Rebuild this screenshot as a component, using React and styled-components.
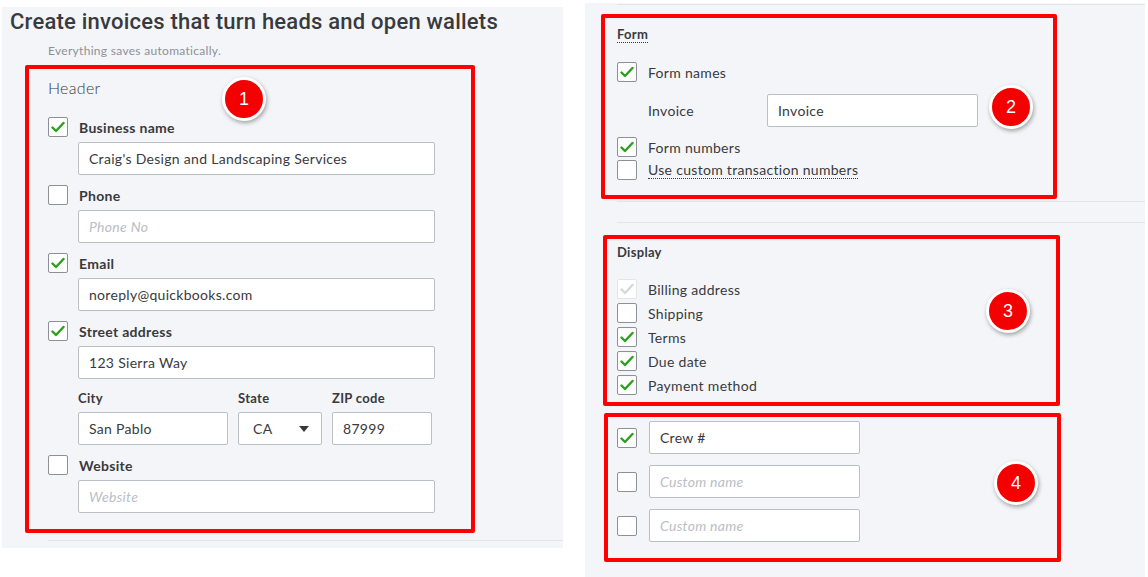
import React from "react";
import styled, { createGlobalStyle } from "styled-components";

const Global = createGlobalStyle`
  html, body { margin: 0; padding: 0; background: #fff; }
  body { font-family: "Lato", "Open Sans", sans-serif; color: #393a3d; letter-spacing: 0.3px; }
  * { box-sizing: border-box; }
`;

const Page = styled.div`
  display: flex;
  align-items: flex-start;
  width: 1148px;
  height: 577px;
  overflow: hidden;
`;

const LeftPanel = styled.section`
  margin: 7px 0 0 2px;
  width: 561px;
  height: 541px;
  background: #f4f5f8;
  display: flex;
  flex-direction: column;
`;

const RightPanel = styled.section`
  margin: 3px 0 0 22px;
  width: 560px;
  height: 574px;
  background: #f4f5f8;
  display: flex;
  flex-direction: column;
`;

const Title = styled.h1`
  margin: 0 0 0 8px;
  font-family: "Roboto", sans-serif;
  font-weight: 500;
  font-size: 22px;
  line-height: 30px;
  letter-spacing: 0.22px;
  color: #393a3d;
`;

const Subtitle = styled.div`
  margin: 6px 0 0 46px;
  font-size: 12px;
  line-height: 16px;
  color: #8d9096;
`;

const Highlight = styled.div`
  position: relative;
  margin: ${(p) => p.$m};
  width: ${(p) => p.$w}px;
  height: ${(p) => p.$h}px;
  border: 4px solid #ff0000;
  border-radius: 2px;
  padding: ${(p) => p.$pad};
  display: flex;
  flex-direction: column;
`;

const Badge = styled.div`
  position: absolute;
  left: ${(p) => p.$x - 26}px;
  top: ${(p) => p.$y - 26}px;
  width: 44px;
  height: 44px;
  border-radius: 50%;
  background: #f50000;
  border: 3px solid #fff;
  box-shadow: 1px 2px 4px rgba(0, 0, 0, 0.35);
  color: #fff;
  font-family: "Liberation Sans", Arial, sans-serif;
  font-size: 18px;
  letter-spacing: 0;
  display: flex;
  align-items: center;
  justify-content: center;
`;

const SectionHeading = styled.div`
  font-size: 16px;
  font-weight: 300;
  line-height: 20px;
  color: #393a3d;
`;

const BoldHeading = styled.div`
  align-self: flex-start;
  font-size: 13px;
  font-weight: 700;
  line-height: 16px;
  color: #393a3d;
  border-bottom: ${(p) => (p.$dotted ? "1px dotted #393a3d" : "none")};
`;

const CheckRow = styled.label`
  display: flex;
  align-items: center;
  gap: 11px;
  height: 20px;
  margin-top: ${(p) => p.$mt || 0}px;
  font-size: 14px;
  font-weight: ${(p) => (p.$bold ? 700 : 400)};
  color: #393a3d;
`;

const Box = styled.span`
  flex: none;
  width: 20px;
  height: 20px;
  background: #fff;
  border: 1px solid ${(p) => (p.$disabled ? "#e3e5e8" : "#8d9096")};
  border-radius: 2px;
  display: flex;
  align-items: center;
  justify-content: center;
`;

const Dotted = styled.span`
  border-bottom: 1px dotted #393a3d;
  line-height: 16px;
`;

const Field = styled.div`
  width: ${(p) => p.$w}px;
  height: 33px;
  flex: none;
  margin: ${(p) => p.$m || 0};
  background: #fff;
  border: 1px solid #babec5;
  border-radius: 2px;
  padding: 0 10px;
  display: flex;
  align-items: center;
  justify-content: space-between;
  font-size: 14px;
  color: ${(p) => (p.$ph ? "#babec5" : "#393a3d")};
  font-style: ${(p) => (p.$ph ? "italic" : "normal")};
`;

const Caret = styled.span`
  width: 0;
  height: 0;
  margin-right: 2px;
  border-left: 5px solid transparent;
  border-right: 5px solid transparent;
  border-top: 6px solid #393a3d;
`;

const AddressGrid = styled.div`
  margin: 11px 0 0 30px;
  display: flex;
  gap: 10px;
`;

const AddressCol = styled.div`
  display: flex;
  flex-direction: column;
  gap: 6px;
`;

const SmallLabel = styled.div`
  font-size: 13px;
  font-weight: 700;
  line-height: 16px;
  color: #393a3d;
`;

const Rule = styled.div`
  height: 1px;
  background: #e3e5e8;
  margin: ${(p) => p.$m};
`;

const InlineRow = styled.div`
  display: flex;
  align-items: center;
  margin-top: ${(p) => p.$mt || 0}px;
`;

const InlineLabel = styled.div`
  width: 119px;
  margin-left: 31px;
  font-size: 14px;
  color: #393a3d;
`;

const CustomRow = styled.div`
  display: flex;
  align-items: center;
  gap: 12px;
  margin-top: ${(p) => p.$mt || 0}px;
`;

const Check = ({ disabled }) => (
  <svg width="14" height="12" viewBox="0 0 14 12">
    <path
      d="M1.5 6.5 L5 10 L12.5 2"
      fill="none"
      stroke={disabled ? "#d4d7dc" : "#2ca01c"}
      strokeWidth="2.4"
      strokeLinecap="round"
      strokeLinejoin="round"
    />
  </svg>
);

const Checkbox = ({ checked, disabled }) => (
  <Box $disabled={disabled}>{checked && <Check disabled={disabled} />}</Box>
);

const HeaderItem = ({ label, checked, value, placeholder, first }) => (
  <>
    <CheckRow $bold $mt={first ? 19 : 10}>
      <Checkbox checked={checked} />
      {label}
    </CheckRow>
    <Field $w={357} $m="5px 0 0 30px" $ph={!value}>
      {value || placeholder}
    </Field>
  </>
);

export default function App() {
  return (
    <>
      <Global />
      <Page>
        <LeftPanel>
          <Title>Create invoices that turn heads and open wallets</Title>
          <Subtitle>Everything saves automatically.</Subtitle>
          <Highlight $m="6px 0 0 23px" $w={450} $h={468} $pad="9px 0 0 19px">
            <Badge $x={219} $y={34}>1</Badge>
            <SectionHeading>Header</SectionHeading>
            <HeaderItem first label="Business name" checked value="Craig's Design and Landscaping Services" />
            <HeaderItem label="Phone" placeholder="Phone No" />
            <HeaderItem label="Email" checked value="noreply@quickbooks.com" />
            <HeaderItem label="Street address" checked value="123 Sierra Way" />
            <AddressGrid>
              <AddressCol>
                <SmallLabel>City</SmallLabel>
                <Field $w={150}>San Pablo</Field>
              </AddressCol>
              <AddressCol>
                <SmallLabel>State</SmallLabel>
                <Field $w={84}>
                  <span style={{ marginLeft: 4 }}>CA</span>
                  <Caret />
                </Field>
              </AddressCol>
              <AddressCol>
                <SmallLabel>ZIP code</SmallLabel>
                <Field $w={100}>87999</Field>
              </AddressCol>
            </AddressGrid>
            <HeaderItem label="Website" placeholder="Website" />
          </Highlight>
          <Rule $m="7px 0 0 46px" />
        </LeftPanel>

        <RightPanel>
          <Rule $m="1px 0 0 32px" />
          <Highlight $m="9px 0 0 16px" $w={456} $h={185} $pad="8px 0 0 12px">
            <Badge $x={410} $y={93}>2</Badge>
            <BoldHeading $dotted>Form</BoldHeading>
            <CheckRow $mt={19}>
              <Checkbox checked />
              Form names
            </CheckRow>
            <InlineRow $mt={12}>
              <InlineLabel>Invoice</InlineLabel>
              <Field $w={211}>Invoice</Field>
            </InlineRow>
            <CheckRow $mt={10}>
              <Checkbox checked />
              Form numbers
            </CheckRow>
            <CheckRow $mt={3}>
              <Checkbox />
              <Dotted>Use custom transaction numbers</Dotted>
            </CheckRow>
          </Highlight>
          <Rule $m="2px 0 0 32px" />
          <Rule $m="20px 0 0 32px" />
          <Highlight $m="12px 0 0 18px" $w={457} $h={171} $pad="5px 0 0 10px">
            <Badge $x={405} $y={76}>3</Badge>
            <BoldHeading>Display</BoldHeading>
            <CheckRow $mt={19}>
              <Checkbox checked disabled />
              Billing address
            </CheckRow>
            <CheckRow $mt={4}>
              <Checkbox />
              Shipping
            </CheckRow>
            <CheckRow $mt={4}>
              <Checkbox checked />
              Terms
            </CheckRow>
            <CheckRow $mt={4}>
              <Checkbox checked />
              Due date
            </CheckRow>
            <CheckRow $mt={4}>
              <Checkbox checked />
              Payment method
            </CheckRow>
          </Highlight>
          <Highlight $m="7px 0 0 19px" $w={457} $h={149} $pad="4px 0 0 9px">
            <Badge $x={412} $y={70}>4</Badge>
            <CustomRow>
              <Checkbox checked />
              <Field $w={211}>Crew #</Field>
            </CustomRow>
            <CustomRow $mt={11}>
              <Checkbox />
              <Field $w={211} $ph>Custom name</Field>
            </CustomRow>
            <CustomRow $mt={11}>
              <Checkbox />
              <Field $w={211} $ph>Custom name</Field>
            </CustomRow>
          </Highlight>
        </RightPanel>
      </Page>
    </>
  );
}
